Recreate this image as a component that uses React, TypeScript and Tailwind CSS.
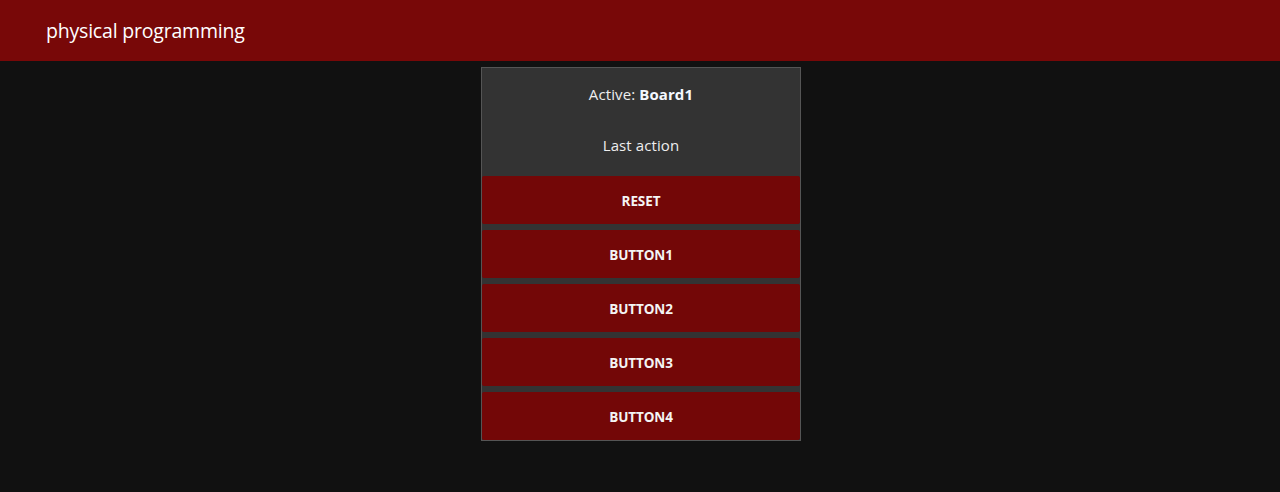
import React from "react";

export default function App() {
  const buttons = ["RESET", "BUTTON1", "BUTTON2", "BUTTON3", "BUTTON4"];
  return (
    <div
      className="min-h-[492px] bg-[#111111] text-[#eeeeee]"
      style={{ fontFamily: '"Open Sans", "Noto Sans", sans-serif' }}
    >
      <header className="h-[61px] bg-[#780808] flex items-center pl-[46px]">
        <h1 className="text-[19.5px] text-white font-normal tracking-[-0.2px]">physical programming</h1>
      </header>
      <div className="flex justify-center pt-[6px] pl-[2px]">
        <div className="w-[320px] border border-[#555555] bg-[#333333] flex flex-col">
          <div className="flex flex-col pb-[4px] pt-[1px]">
            <div className="h-[50px] flex items-center justify-center text-[15px] tracking-[0.1px]">
              <span>
                Active: <b className="font-bold text-[#f4f8ff]">Board1</b>
              </span>
            </div>
            <div className="h-[53px] flex items-center justify-center text-[15px] tracking-[0.1px]">
              Last action
            </div>
          </div>
          <div className="flex flex-col gap-[6px]">
            {buttons.map((b) => (
              <button
                key={b}
                className="h-[48px] w-full bg-[#730707] rounded-[2px] pt-[2px] text-[13.5px] font-bold text-[#f4f4f4] tracking-[-0.1px]"
              >
                {b}
              </button>
            ))}
          </div>
        </div>
      </div>
    </div>
  );
}
